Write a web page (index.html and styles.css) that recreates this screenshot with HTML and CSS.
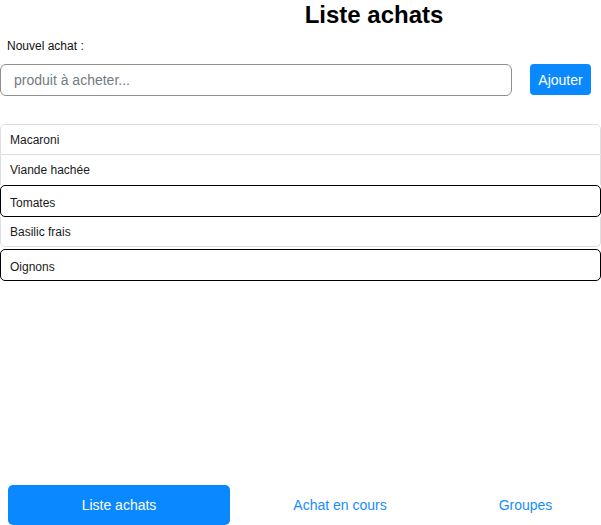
FILE: index.html
```html
<!DOCTYPE html>
<html lang="fr">
<head>
<meta charset="utf-8">
<title>Liste achats</title>
<link rel="stylesheet" href="styles.css">
</head>
<body>
<div class="app">
  <h1 class="title">Liste achats</h1>
  <div class="label">Nouvel achat :</div>
  <div class="add-row">
    <input class="field" type="text" placeholder="produit à acheter...">
    <button class="add-btn">Ajouter</button>
  </div>
  <div class="list">
    <div class="item first">Macaroni</div>
    <div class="item before-sel">Viande hachée</div>
    <div class="item sel">Tomates</div>
    <div class="item last">Basilic frais</div>
    <div class="item sel gap">Oignons</div>
  </div>
  <div class="spacer"></div>
  <nav class="nav">
    <button class="tab active">Liste achats</button>
    <button class="tab">Achat en cours</button>
    <button class="tab">Groupes</button>
  </nav>
</div>
</body>
</html>
```
FILE: styles.css
```css
html, body {
  margin: 0;
  padding: 0;
  background: #fff;
}
body {
  font-family: "Liberation Sans", Arial, sans-serif;
  color: #111;
}
.app {
  height: 525px;
  display: flex;
  flex-direction: column;
}
.title {
  margin: 0;
  padding: 1px 0 0 147px;
  text-align: center;
  font-size: 24px;
  font-weight: bold;
  line-height: 28px;
  color: #000;
}
.label {
  margin: 10px 0 0 7px;
  font-size: 12px;
  line-height: 14px;
  color: #111;
}
.add-row {
  margin-top: 11px;
  display: flex;
  align-items: flex-start;
}
.field {
  box-sizing: border-box;
  width: 512px;
  height: 32px;
  margin: 0;
  border: 1px solid #8f8f8f;
  border-radius: 6px;
  padding: 0 0 0 13px;
  font-family: "Liberation Sans", Arial, sans-serif;
  font-size: 14px;
  color: #333;
  outline: none;
}
.field::placeholder {
  color: #737b83;
}
.add-btn {
  box-sizing: border-box;
  margin-left: 18px;
  width: 61px;
  height: 31px;
  border: none;
  border-radius: 4px;
  background: #0a88ff;
  color: #fff;
  font-family: "Liberation Sans", Arial, sans-serif;
  font-size: 14px;
  padding: 0;
}
.list {
  margin-top: 28px;
  display: flex;
  flex-direction: column;
}
.item {
  box-sizing: border-box;
  height: 31px;
  border: 1px solid #dedede;
  border-top: none;
  padding-left: 9px;
  display: flex;
  align-items: center;
  font-size: 12px;
  color: #1a1a1a;
}
.item.first {
  border-top: 1px solid #dedede;
  border-radius: 5px 5px 0 0;
}
.item.before-sel {
  height: 30px;
  border-bottom: none;
}
.item.sel {
  height: 32px;
  border: 1px solid #000;
  border-radius: 5px;
  padding-top: 3px;
}
.item.last {
  height: 30px;
  border-radius: 0 0 5px 5px;
}
.item.gap {
  margin-top: 2px;
}
.spacer {
  flex: 1;
}
.nav {
  display: grid;
  grid-template-columns: 222px 220px 1fr;
  padding: 0 0 0 8px;
  align-items: center;
}
.tab {
  height: 40px;
  border: none;
  background: transparent;
  color: #1a8cff;
  font-family: "Liberation Sans", Arial, sans-serif;
  font-size: 14px;
  padding: 0;
}
.tab.active {
  background: #0a88ff;
  color: #fff;
  border-radius: 5px;
}
```
